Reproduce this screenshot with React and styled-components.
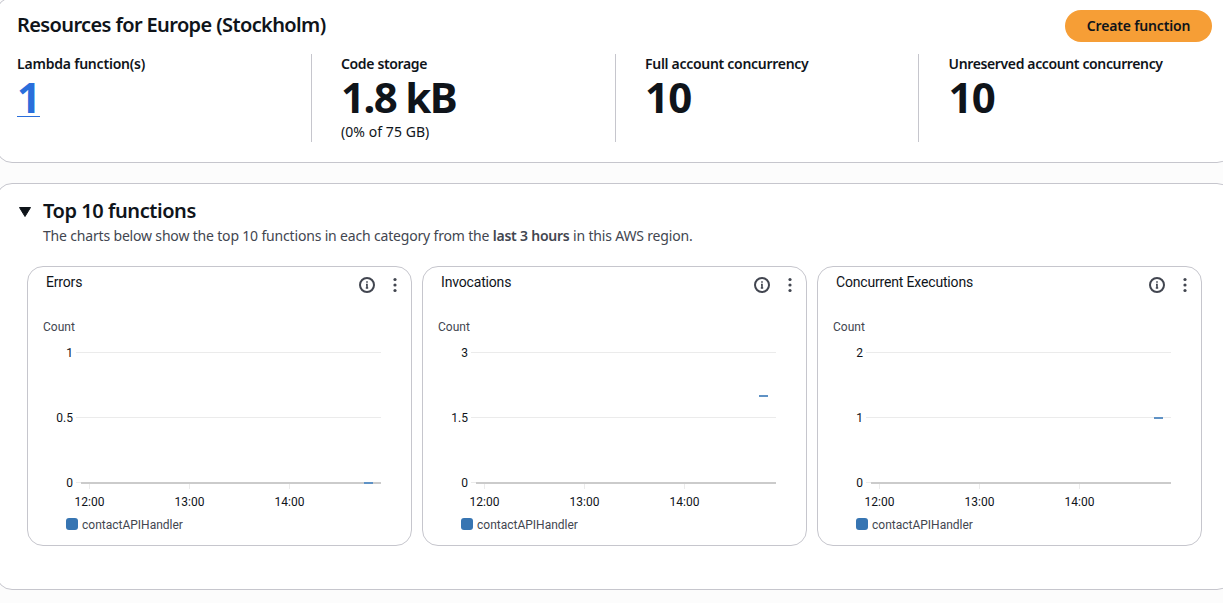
import React from 'react';
import styled, { createGlobalStyle } from 'styled-components';

const GlobalStyle = createGlobalStyle`
  *, *::before, *::after { box-sizing: border-box; }
  body {
    margin: 0;
    background: #fcfcfc;
    color: #0f141a;
    font: 14px/20px "Noto Sans", "Open Sans", sans-serif;
    overflow: hidden;
  }
  h2, p { margin: 0; }
`;

const Page = styled.main`
  height: 603px;
  overflow: hidden;
`;

const Stack = styled.div`
  margin: -3px -10px 0 -4px;
  display: flex;
  flex-direction: column;
  gap: 20px;
`;

const Panel = styled.section`
  height: ${(p) => p.$height}px;
  background: #fff;
  border: 1px solid #c6c6cd;
  border-radius: 16px;
  padding: ${(p) => p.$padding};
`;

const PanelHeader = styled.header`
  display: flex;
  justify-content: space-between;
  height: 32px;

  h2 { padding-top: 3px; }
`;

const Heading = styled.h2`
  font-size: 20px;
  line-height: 24px;
  font-weight: 600;
  white-space: nowrap;
  letter-spacing: ${(p) => p.$tracking}px;
`;

const PrimaryButton = styled.button`
  width: 147px;
  height: 32px;
  padding: 0;
  border: 0;
  border-radius: 16px;
  background: #f69e36;
  color: #0f141a;
  font: 600 14px/20px "Noto Sans", sans-serif;
  letter-spacing: -0.16px;
`;

const Metrics = styled.div`
  display: grid;
  grid-template-columns: 294px 304px 303px 1fr;
  height: 88px;
  margin-top: 12px;
`;

const Metric = styled.div`
  & + & {
    border-left: 1px solid #c6c6cd;
    padding-left: 29px;
  }
  & + &:last-child { padding-left: 29.6px; }
`;

const MetricLabel = styled.div`
  font-weight: 600;
  white-space: nowrap;
  letter-spacing: ${(p) => p.$tracking}px;
`;

const MetricValue = styled.div`
  height: 48px;
  font-size: 42px;
  line-height: 46px;
  font-weight: 700;
  letter-spacing: ${(p) => p.$tracking || -0.8}px;
`;

const MetricLink = styled.a`
  display: inline-block;
  height: 43px;
  color: #2a6edb;
  border-bottom: 1px solid #2a6edb;
`;

const MetricNote = styled.div`
  letter-spacing: 0.06px;
`;

const ExpandHeader = styled.header`
  display: flex;
  align-items: flex-start;
`;

const Caret = styled.svg`
  width: 12px;
  height: 10px;
  margin: 8px 12px 0 2px;
  flex: none;
`;

const Description = styled.p`
  color: #424650;
  white-space: nowrap;
  letter-spacing: -0.175px;
  margin-top: 3px;
  b { font-weight: 600; letter-spacing: -0.22px; }
`;

const ChartGrid = styled.div`
  display: grid;
  grid-template-columns: repeat(3, 385px);
  gap: 10px;
  margin: 20px 0 0 10px;
`;

const ChartCard = styled.article`
  height: 280px;
  border: 1px solid #c6c6cd;
  border-radius: 16px;
  font-family: Roboto, sans-serif;
`;

const ChartHeader = styled.div`
  display: flex;
  height: 36px;
  padding: 5px 8px 0 18px;
`;

const ChartTitle = styled.div`
  flex: 1;
  letter-spacing: -0.17px;
`;

const Icon = styled.svg`
  width: 16px;
  height: 16px;
  margin: 5px 0 0 ${(p) => p.$gap || 0}px;
  flex: none;
`;

const Plot = styled.svg`
  display: block;
  width: 383px;
  height: 206px;
  font: 12px Roboto, sans-serif;
`;

const Legend = styled.div`
  display: flex;
  align-items: flex-start;
  gap: 4px;
  height: 20px;
  margin-top: 9px;
  padding-left: 38px;
  font-size: 12px;
  line-height: 14px;
  color: #424650;
`;

const Swatch = styled.span`
  width: 12px;
  height: 12px;
  border-radius: 3px;
  background: #3775b2;
`;

const PLOT_TOP = 50;
const PLOT_HEIGHT = 130;
const yFor = (value, max) => Math.round(PLOT_TOP + PLOT_HEIGHT * (1 - value / max));

function Chart({ title, max, value }) {
  return (
    <ChartCard>
      <ChartHeader>
        <ChartTitle>{title}</ChartTitle>
        <Icon viewBox="0 0 16 16" fill="none" stroke="#424650" strokeWidth="2">
          <circle cx="8" cy="8" r="7" />
          <path d="M8 4.2v1.6M7 7.6h1V11.6M6.8 11h2.4" strokeWidth="1.6" />
        </Icon>
        <Icon viewBox="0 0 16 16" fill="#424650" $gap={12}>
          <circle cx="8" cy="2.5" r="1.6" />
          <circle cx="8" cy="8" r="1.6" />
          <circle cx="8" cy="13.5" r="1.6" />
        </Icon>
      </ChartHeader>
      <Plot>
        <text x="15" y="28" fill="#424650">Count</text>
        {[max, max / 2, 0].map((tick) => (
          <g key={tick}>
            <rect x="48" y={yFor(tick, max) - 1} width={tick ? 305 : 6} height="1" fill="#ebebeb" />
            <text x="45" y={yFor(tick, max) + 4} textAnchor="end" fill="#0f141a">{tick}</text>
          </g>
        ))}
        <rect x="53" y="179" width="300" height="2" fill="#cbcbcb" />
        {['12:00', '13:00', '14:00'].map((time, i) => (
          <g key={time}>
            <rect x={61 + i * 100} y="181" width="1" height="5" fill="#ebebeb" />
            <text x={61.5 + i * 100} y="203" textAnchor="middle" fill="#0f141a">{time}</text>
          </g>
        ))}
        <rect x="336" y={yFor(value, max) - 1} width="9" height="2" fill="#5f92c5" />
      </Plot>
      <Legend><Swatch />contactAPIHandler</Legend>
    </ChartCard>
  );
}

export default function App() {
  return (
    <Page>
      <GlobalStyle />
      <Stack>
        <Panel $height={166} $padding="12px 20px 0">
          <PanelHeader>
            <Heading $tracking={-0.62}>Resources for Europe (Stockholm)</Heading>
            <PrimaryButton>Create function</PrimaryButton>
          </PanelHeader>
          <Metrics>
            <Metric>
              <MetricLabel $tracking={-0.21}>Lambda function(s)</MetricLabel>
              <MetricValue><MetricLink>1</MetricLink></MetricValue>
            </Metric>
            <Metric>
              <MetricLabel $tracking={-0.35}>Code storage</MetricLabel>
              <MetricValue $tracking={-1.6}>1.8 kB</MetricValue>
              <MetricNote>(0% of 75 GB)</MetricNote>
            </Metric>
            <Metric>
              <MetricLabel $tracking={-0.29}>Full account concurrency</MetricLabel>
              <MetricValue>10</MetricValue>
            </Metric>
            <Metric>
              <MetricLabel $tracking={-0.37}>Unreserved account concurrency</MetricLabel>
              <MetricValue>10</MetricValue>
            </Metric>
          </Metrics>
        </Panel>
        <Panel $height={407} $padding="15px 20px 0">
          <ExpandHeader>
            <Caret viewBox="0 0 12 10"><path d="M.5 .5h11L6 9.5z" fill="#0f141a" stroke="#0f141a" strokeLinejoin="round" /></Caret>
            <div>
              <Heading $tracking={-0.44}>Top 10 functions</Heading>
              <Description>
                The charts below show the top 10 functions in each category from the <b>last 3 hours</b> in this AWS region.
              </Description>
            </div>
          </ExpandHeader>
          <ChartGrid>
            <Chart title="Errors" max={1} value={0} />
            <Chart title="Invocations" max={3} value={2} />
            <Chart title="Concurrent Executions" max={2} value={1} />
          </ChartGrid>
        </Panel>
      </Stack>
    </Page>
  );
}
